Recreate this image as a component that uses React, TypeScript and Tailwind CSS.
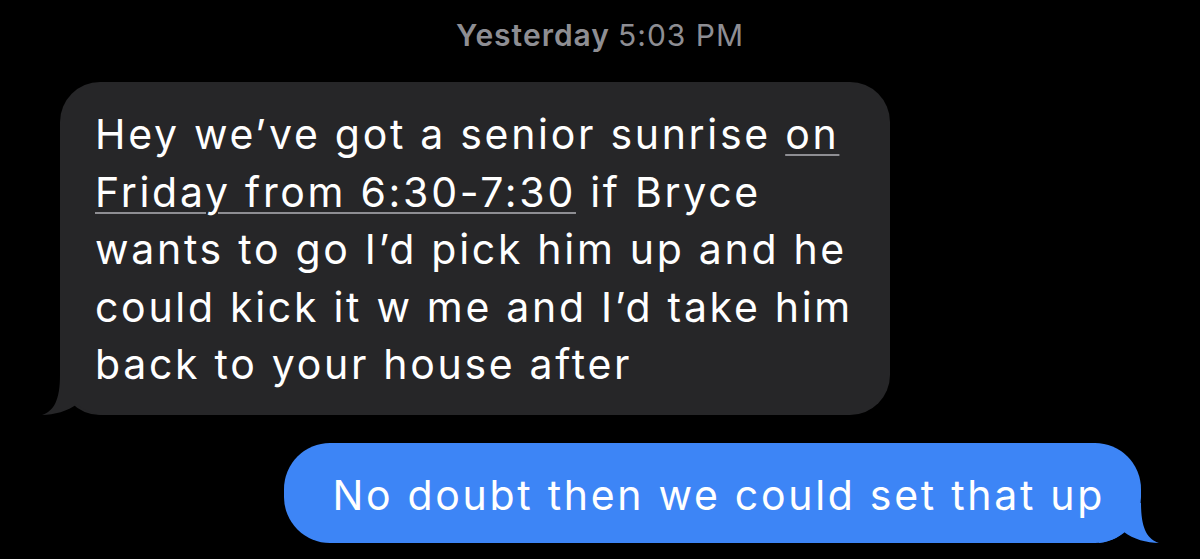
export default function App() {
  return (
    <div
      className="h-[559px] w-[1200px] overflow-hidden bg-black"
      style={{ fontFamily: 'Inter, "Noto Sans", sans-serif' }}
    >
      <div className="flex h-[82px] items-start justify-center pt-[17px] text-[30px] leading-[36px] tracking-[1px] text-[#8e8e93]">
        <span className="font-semibold">Yesterday</span>
        <span className="ml-[8px]">5:03 PM</span>
      </div>

      {/* incoming */}
      <div className="pl-[60px]">
        <div className="relative w-[830px] rounded-[40px] bg-[#262628] pb-[21px] pl-[35px] pr-[20px] pt-[24px] text-[41px] leading-[57.5px] tracking-[2.7px] text-white">
          <svg className="absolute bottom-0 left-[-18px]" width="60" height="40" viewBox="0 0 60 40">
            <path d="M18 0 C18 25 12 36 0 40 C12 40 26 36 35 29 C40 34 48 38 60 40 L60 0 Z" fill="#262628" />
          </svg>
          <span className="relative">
            Hey we’ve got a senior sunrise{' '}
            <span className="underline decoration-[#8e8e93] decoration-2 underline-offset-[5px]">
              on
              <br />
              Friday from 6:30-7:30
            </span>{' '}
            if Bryce
            <br />
            wants to go I’d pick him up and he
            <br />
            could kick it w me and I’d take him
            <br />
            back to your house after
          </span>
        </div>
      </div>

      {/* outgoing */}
      <div className="flex justify-end pr-[59px] pt-[28px]">
        <div className="relative rounded-[46px] bg-[#3d85f6] pb-[17px] pl-[48px] pr-[36px] pt-[21px] text-[41px] leading-[62px] tracking-[2.7px] text-white">
          <svg className="absolute bottom-0 right-[-18px]" width="60" height="40" viewBox="0 0 60 40">
            <path d="M42 0 C42 25 48 36 60 40 C48 40 34 36 25 29 C20 34 12 38 0 40 L0 0 Z" fill="#3d85f6" />
          </svg>
          <span className="relative">No doubt then we could set that up</span>
        </div>
      </div>
    </div>
  );
}
